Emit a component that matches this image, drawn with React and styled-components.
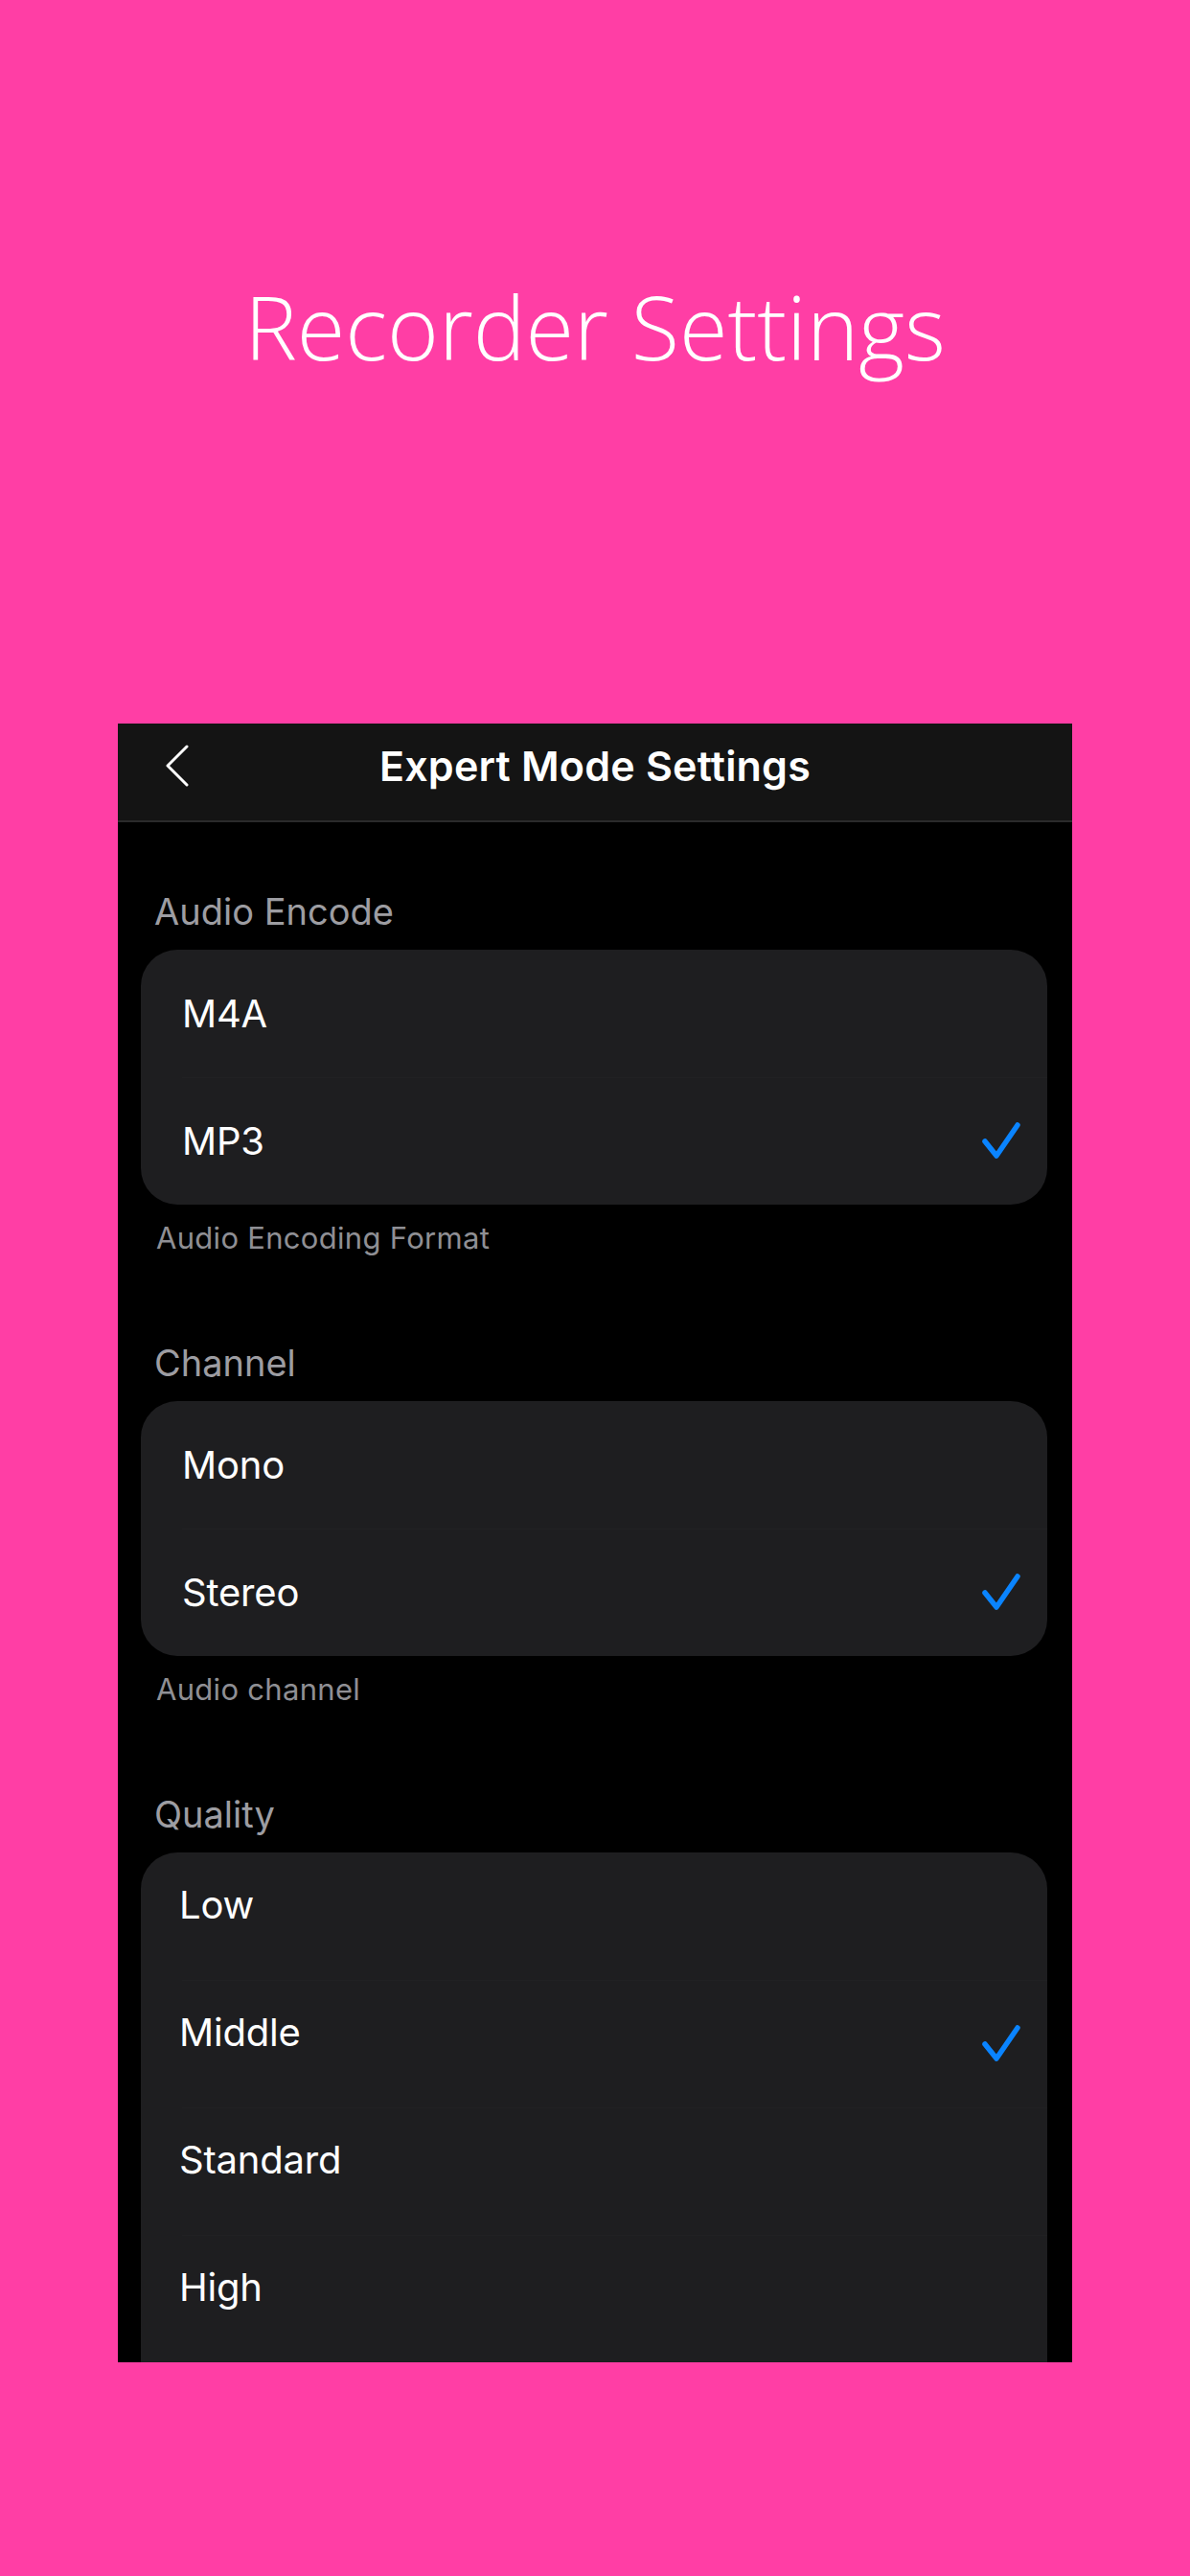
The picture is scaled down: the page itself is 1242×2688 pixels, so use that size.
import React from 'react'
import styled, { createGlobalStyle } from 'styled-components'

const GlobalStyle = createGlobalStyle`
  html, body {
    margin: 0;
    padding: 0;
    background: #ff3ea5;
  }
  * { box-sizing: border-box; }
`

const Page = styled.div`
  width: 1242px;
  height: 2688px;
  background: #ff3ea5;
  display: flex;
  flex-direction: column;
  align-items: center;
  overflow: hidden;
`

const Hero = styled.h1`
  margin: 0;
  height: 755px;
  padding-top: 295px;
  font-family: "Open Sans", "Noto Sans", sans-serif;
  font-weight: 300;
  font-size: 92px;
  line-height: 92px;
  color: #fff;
  text-align: center;
  width: 100%;
`

const Phone = styled.div`
  width: 996px;
  height: 1710px;
  background: #000;
  overflow: hidden;
  display: flex;
  flex-direction: column;
  font-family: Inter, "Liberation Sans", sans-serif;
  color: #fff;
`

const NavBar = styled.div`
  height: 103px;
  flex-shrink: 0;
  background: #141414;
  border-bottom: 2px solid #2a2a2b;
  padding: 0 0 14px;
  display: grid;
  grid-template-columns: 120px 1fr 120px;
  align-items: center;
`

const BackButton = styled.button`
  background: none;
  border: 0;
  padding: 0 0 0 50px;
  height: 48px;
  display: flex;
  align-items: center;
  cursor: pointer;
`

const NavTitle = styled.div`
  text-align: center;
  font-size: 43px;
  font-weight: 600;
  letter-spacing: 0.2px;
`

const Content = styled.div`
  padding: 69px 26px 0 24px;
  display: flex;
  flex-direction: column;
`

const Section = styled.section`
  display: flex;
  flex-direction: column;
  & + & {
    margin-top: 86px;
  }
`

const SectionLabel = styled.div`
  font-size: 38px;
  line-height: 48px;
  color: #9d9da2;
  padding-left: 14px;
  margin-bottom: 16px;
`

const Card = styled.div`
  background: #1e1e20;
  border-radius: 38px;
  overflow: hidden;
  padding-bottom: ${({ $open }) => ($open ? '80px' : '0')};
  ${({ $open }) => $open && 'border-bottom-left-radius: 0; border-bottom-right-radius: 0;'}
`

const Row = styled.div`
  height: 133px;
  display: flex;
  align-items: center;
  justify-content: space-between;
  padding: 0 28px 0 ${({ $lift }) => ($lift ? '40px' : '43px')};
  position: relative;
  & + &::before {
    content: '';
    position: absolute;
    top: 0;
    left: 43px;
    right: 0;
    height: 1px;
    background: #212123;
  }
`

const RowLabel = styled.span`
  font-size: 40px;
  letter-spacing: -0.2px;
  padding-bottom: ${({ $lift }) => ($lift ? '24px' : '0')};
`

const Footnote = styled.div`
  margin-top: 15px;
  font-size: 31px;
  line-height: 40px;
  letter-spacing: 0.3px;
  color: #8f8f94;
  padding-left: 16px;
`

const Chevron = () => (
  <svg width="24" height="44" viewBox="0 0 24 44" fill="none">
    <polyline points="22,2 2,22 22,42" stroke="#fff" strokeWidth="3" strokeLinecap="round" strokeLinejoin="round" />
  </svg>
)

const Check = () => (
  <svg width="40" height="40" viewBox="0 0 40 40" fill="none">
    <polyline points="3,20 15,35 37,3" stroke="#0a84ff" strokeWidth="5.5" strokeLinecap="round" strokeLinejoin="round" />
  </svg>
)

const sections = [
  { label: 'Audio Encode', options: ['M4A', 'MP3'], selected: 'MP3', note: 'Audio Encoding Format' },
  { label: 'Channel', options: ['Mono', 'Stereo'], selected: 'Stereo', note: 'Audio channel' },
  { label: 'Quality', options: ['Low', 'Middle', 'Standard', 'High'], selected: 'Middle', open: true, lift: true },
]

export default function App() {
  return (
    <>
      <GlobalStyle />
      <Page>
        <Hero>Recorder Settings</Hero>
        <Phone>
          <NavBar>
            <BackButton aria-label="Back">
              <Chevron />
            </BackButton>
            <NavTitle>Expert Mode Settings</NavTitle>
            <div />
          </NavBar>
          <Content>
            {sections.map((s) => (
              <Section key={s.label}>
                <SectionLabel>{s.label}</SectionLabel>
                <Card $open={s.open}>
                  {s.options.map((opt) => (
                    <Row key={opt} $lift={s.lift}>
                      <RowLabel $lift={s.lift}>{opt}</RowLabel>
                      {opt === s.selected && <Check />}
                    </Row>
                  ))}
                </Card>
                {s.note && <Footnote>{s.note}</Footnote>}
              </Section>
            ))}
          </Content>
        </Phone>
      </Page>
    </>
  )
}
